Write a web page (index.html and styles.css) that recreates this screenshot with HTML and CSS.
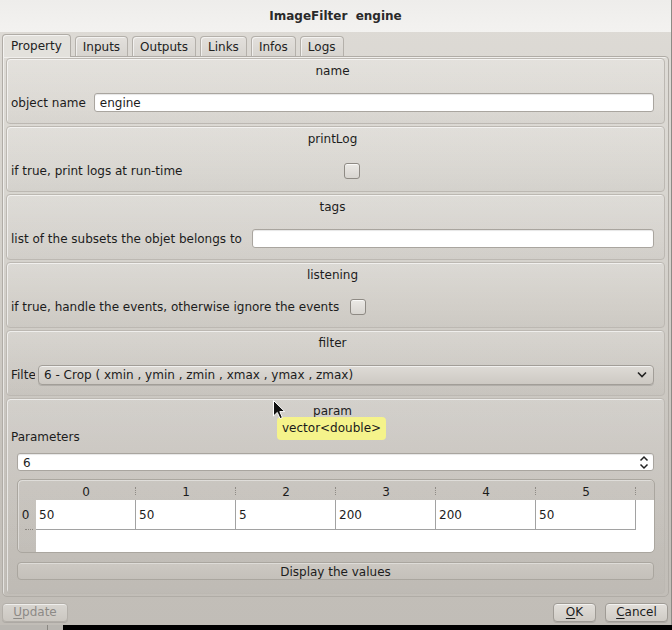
FILE: index.html
```html
<!DOCTYPE html>
<html>
<head>
<meta charset="utf-8">
<title>ImageFilter engine</title>
<link rel="stylesheet" href="styles.css">
</head>
<body>
<div class="screen">
  <div class="window">
    <div class="titlebar">ImageFilter&nbsp; engine</div>
    <div class="body">
      <div class="tabs">
        <div class="tab active">Property</div>
        <div class="tab">Inputs</div>
        <div class="tab">Outputs</div>
        <div class="tab">Links</div>
        <div class="tab">Infos</div>
        <div class="tab">Logs</div>
      </div>
      <div class="pane">
        <div class="groups">
          <div class="group">
            <div class="gtitle">name</div>
            <div class="row">
              <span class="label">object name</span>
              <div class="input">engine</div>
            </div>
          </div>
          <div class="group">
            <div class="gtitle">printLog</div>
            <div class="row">
              <span class="label">if true, print logs at run-time</span>
              <span class="check check-print"></span>
            </div>
          </div>
          <div class="group">
            <div class="gtitle">tags</div>
            <div class="row">
              <span class="label">list of the subsets the objet belongs to</span>
              <div class="input input-tags"></div>
            </div>
          </div>
          <div class="group">
            <div class="gtitle">listening</div>
            <div class="row">
              <span class="label">if true, handle the events, otherwise ignore the events</span>
              <span class="check check-listen"></span>
            </div>
          </div>
          <div class="group">
            <div class="gtitle">filter</div>
            <div class="row">
              <span class="label label-clip">Filter</span>
              <div class="combo">
                <span class="combo-text">6 - Crop ( xmin , ymin , zmin , xmax , ymax , zmax)</span>
                <svg class="chev" width="10" height="7" viewBox="0 0 10 7"><path d="M1 1.5 L5 5.5 L9 1.5" fill="none" stroke="#222" stroke-width="1.6"/></svg>
              </div>
            </div>
          </div>
          <div class="group param">
            <div class="gtitle">param</div>
            <div class="plabel">Parameters</div>
            <div class="spin">
              <span class="spin-text">6</span>
              <svg class="spin-arrows" width="10" height="15" viewBox="0 0 10 15"><path d="M1.5 5.5 L5 2 L8.5 5.5" fill="none" stroke="#222" stroke-width="1.5"/><path d="M1.5 9.5 L5 13 L8.5 9.5" fill="none" stroke="#222" stroke-width="1.5"/></svg>
            </div>
            <div class="table">
              <div class="corner"></div>
              <div class="thead">
                <div class="hcell">0<span class="sep"></span></div>
                <div class="hcell">1<span class="sep"></span></div>
                <div class="hcell">2<span class="sep"></span></div>
                <div class="hcell">3<span class="sep"></span></div>
                <div class="hcell">4<span class="sep"></span></div>
                <div class="hcell">5<span class="sep"></span></div>
              </div>
              <div class="rowhead"><span class="rnum">0</span><span class="rdots"></span></div>
              <div class="tbody">
                <div class="trow">
                  <div class="cell">50</div>
                  <div class="cell">50</div>
                  <div class="cell">5</div>
                  <div class="cell">200</div>
                  <div class="cell">200</div>
                  <div class="cell">50</div>
                </div>
              </div>
            </div>
            <div class="wbutton">Display the values</div>
          </div>
        </div>
      </div>
      <div class="buttons">
        <div class="btn btn-update disabled"><u>U</u>pdate</div>
        <div class="btn btn-ok"><u>O</u>K</div>
        <div class="btn btn-cancel"><u>C</u>ancel</div>
      </div>
    </div>
  </div>
  <div class="strip"><div class="strip-grey"></div></div>
  <div class="tooltip">vector&lt;double&gt;</div>
  <svg class="cursor" width="13" height="20" viewBox="0 0 13 20"><path d="M0.5 0.5 L0.5 16 L4.3 12.4 L7 18.6 L9.4 17.6 L6.8 11.6 L11.8 11.6 Z" fill="#111" stroke="#fff" stroke-width="1" stroke-linejoin="round"/></svg>
</div>
</body>
</html>
```

FILE: styles.css
```css
* { box-sizing: border-box; }
html, body { margin: 0; padding: 0; }
body {
  font-family: "DejaVu Sans", "Liberation Sans", sans-serif;
  font-size: 12px;
  color: #1c1c1c;
  background: #000;
}
.screen {
  position: relative;
  width: 672px;
  height: 630px;
  overflow: hidden;
}
.window {
  height: 625px;
  display: flex;
  flex-direction: column;
  background: linear-gradient(#deDBd6 0px, #d3d0ca 260px, #c6c2bc 450px, #c1bdb7 625px);
  border-right: 1px solid #8d8a85;
}
.titlebar {
  flex: none;
  height: 32px;
  line-height: 32px;
  text-align: center;
  font-weight: bold;
  color: #2a2a2a;
  background: linear-gradient(#eeedeb, #f3f2f0);
}
.body {
  flex: 1;
  display: flex;
  flex-direction: column;
  padding: 2px 2px 0 2px;
}
.tabs {
  height: 22px;
  display: flex;
  align-items: flex-end;
  gap: 4px;
  position: relative;
  z-index: 2;
}
.tab {
  height: 20px;
  line-height: 20px;
  padding: 0 7px;
  border: 1px solid #b4b0aa;
  border-bottom: none;
  border-radius: 4px 4px 0 0;
  background: linear-gradient(#e3e0dc, #d7d4cf);
  box-shadow: inset 1px 1px 0 rgba(255,255,255,0.6);
  color: #222;
}
.tab.active {
  height: 23px;
  line-height: 23px;
  padding: 0 8px;
  margin-bottom: -1px;
  background: #e3e1dc;
  border-color: #b0aca6;
}
.pane {
  height: 541px;
  border: 1px solid #b0aca6;
  border-radius: 0 4px 5px 5px;
  padding: 1px 3px 0 3px;
  box-shadow: inset 1px 1px 0 rgba(255,255,255,0.55);
  background: linear-gradient(rgba(255,255,255,0.08), rgba(255,255,255,0));
}
.groups {
  display: flex;
  flex-direction: column;
  gap: 2px;
}
.group {
  height: 66px;
  border: 1px solid #bcb8b2;
  border-radius: 4px;
  padding: 0 10px 0 4px;
  background: linear-gradient(rgba(255,255,255,0.16), rgba(255,255,255,0) 70%, rgba(0,0,0,0.02));
  box-shadow: inset 1px 1px 0 rgba(255,255,255,0.6);
}
.gtitle {
  height: 22px;
  padding-top: 2px;
  line-height: 20px;
  text-align: center;
}
.row {
  margin-top: 12px;
  height: 19px;
  display: flex;
  align-items: center;
}
.label {
  white-space: nowrap;
  line-height: 19px;
  padding-top: 2px;
}
.label-clip {
  width: 24px;
  overflow: hidden;
  flex: none;
}
.input {
  flex: 1;
  height: 19px;
  line-height: 17px;
  padding: 1px 0 0 5px;
  margin-left: 8px;
  background: #fff;
  border: 1px solid #a9a59f;
  border-radius: 3px;
  box-shadow: inset 0 1px 1px rgba(0,0,0,0.10);
}
.input-tags { margin-left: 10px; }
.check {
  width: 16px;
  height: 16px;
  border: 1px solid #8e8a84;
  border-radius: 3px;
  background: linear-gradient(#ebe9e5, #d8d5d0);
  box-shadow: inset 0 1px 0 rgba(255,255,255,0.7);
  flex: none;
}
.check-print { margin-left: 162px; }
.check-listen { margin-left: 11px; }
.combo {
  flex: 1;
  height: 20px;
  margin-left: 3px;
  display: flex;
  align-items: center;
  justify-content: space-between;
  padding: 0 6px 0 5px;
  border: 1px solid #a29e98;
  border-radius: 4px;
  background: linear-gradient(#dedbd6, #cdc9c3);
  box-shadow: inset 0 1px 0 rgba(255,255,255,0.6), 0 1px 0 rgba(0,0,0,0.12);
}
.combo-text { white-space: nowrap; }
.chev { display: block; }
.param { height: 196px; }
.plabel {
  margin-top: 8px;
  line-height: 16px;
  height: 16px;
}
.spin {
  margin: 8px 0 0 6px;
  height: 18px;
  display: flex;
  align-items: center;
  justify-content: space-between;
  padding: 1px 4px 0 5px;
  background: #fff;
  border: 1px solid #a9a59f;
  border-radius: 3px;
  box-shadow: inset 0 1px 1px rgba(0,0,0,0.10);
}
.spin-arrows { display: block; margin-top: -1px; }
.table {
  margin: 8px -1px 0 6px;
  height: 74px;
  border: 1px solid #aaa69f;
  border-radius: 5px;
  display: grid;
  grid-template-columns: 18px 1fr;
  grid-template-rows: 20px 1fr;
  overflow: hidden;
  box-shadow: inset 1px 1px 0 rgba(255,255,255,0.4);
}
.thead {
  display: flex;
}
.hcell {
  width: 100px;
  flex: none;
  position: relative;
  text-align: center;
  line-height: 20px;
  padding-top: 2px;
}
.sep {
  position: absolute;
  right: 0;
  top: 7px;
  width: 2px;
  height: 8px;
  border-right: 1px dotted #8f8b85;
}
.rowhead {
  display: flex;
  flex-direction: column;
  align-items: center;
  padding-top: 7px;
}
.rnum {
  line-height: 16px;
  margin-left: -3px;
}
.rdots {
  width: 8px;
  height: 1px;
  margin-top: 6px;
  margin-left: 3px;
  border-top: 1px dotted #8a8680;
}
.tbody {
  background: #fff;
  border-radius: 0 0 4px 0;
}
.trow {
  display: flex;
  height: 30px;
}
.cell {
  width: 100px;
  flex: none;
  height: 30px;
  line-height: 28px;
  padding: 1px 0 0 3px;
  border-right: 1px solid #a2a2a2;
  border-bottom: 1px solid #a2a2a2;
}
.wbutton {
  margin: 9px 0 0 6px;
  height: 18px;
  line-height: 16px;
  padding-top: 1px;
  text-align: center;
  border: 1px solid #aaa69f;
  border-radius: 4px;
  background: linear-gradient(#cdc9c3, #c4c0ba);
  box-shadow: inset 0 1px 0 rgba(255,255,255,0.35);
}
.buttons {
  margin-top: 6px;
  height: 19px;
  display: flex;
}
.btn {
  height: 19px;
  line-height: 17px;
  text-align: center;
  border: 1px solid #9f9b95;
  border-radius: 4px;
  background: linear-gradient(#e2dfda, #cfcbc5);
  box-shadow: inset 0 1px 0 rgba(255,255,255,0.6), 0 1px 0 rgba(0,0,0,0.1);
  color: #1c1c1c;
}
.btn u { text-decoration: underline; text-underline-offset: 2px; }
.btn-update { width: 66px; }
.btn.disabled { color: #8d8a86; border-color: #b3afa9; background: linear-gradient(#d8d5d0, #cbc7c1); }
.btn-ok { width: 43px; margin-left: auto; }
.btn-cancel { width: 63px; margin-left: 9px; margin-right: 1px; }
.strip {
  height: 5px;
  display: flex;
  background: #000;
}
.strip-grey {
  width: 63px;
  background: linear-gradient(90deg, #b9b6b1 0 47px, #8a8782 47px 48px, #b9b6b1 48px);
}
.tooltip {
  position: absolute;
  left: 277px;
  top: 417px;
  width: 109px;
  height: 23px;
  line-height: 23px;
  padding-left: 5px;
  background: #f5f38b;
  border-radius: 4px;
  color: #1a1a1a;
  white-space: nowrap;
}
.cursor {
  position: absolute;
  left: 273px;
  top: 400px;
}
```
